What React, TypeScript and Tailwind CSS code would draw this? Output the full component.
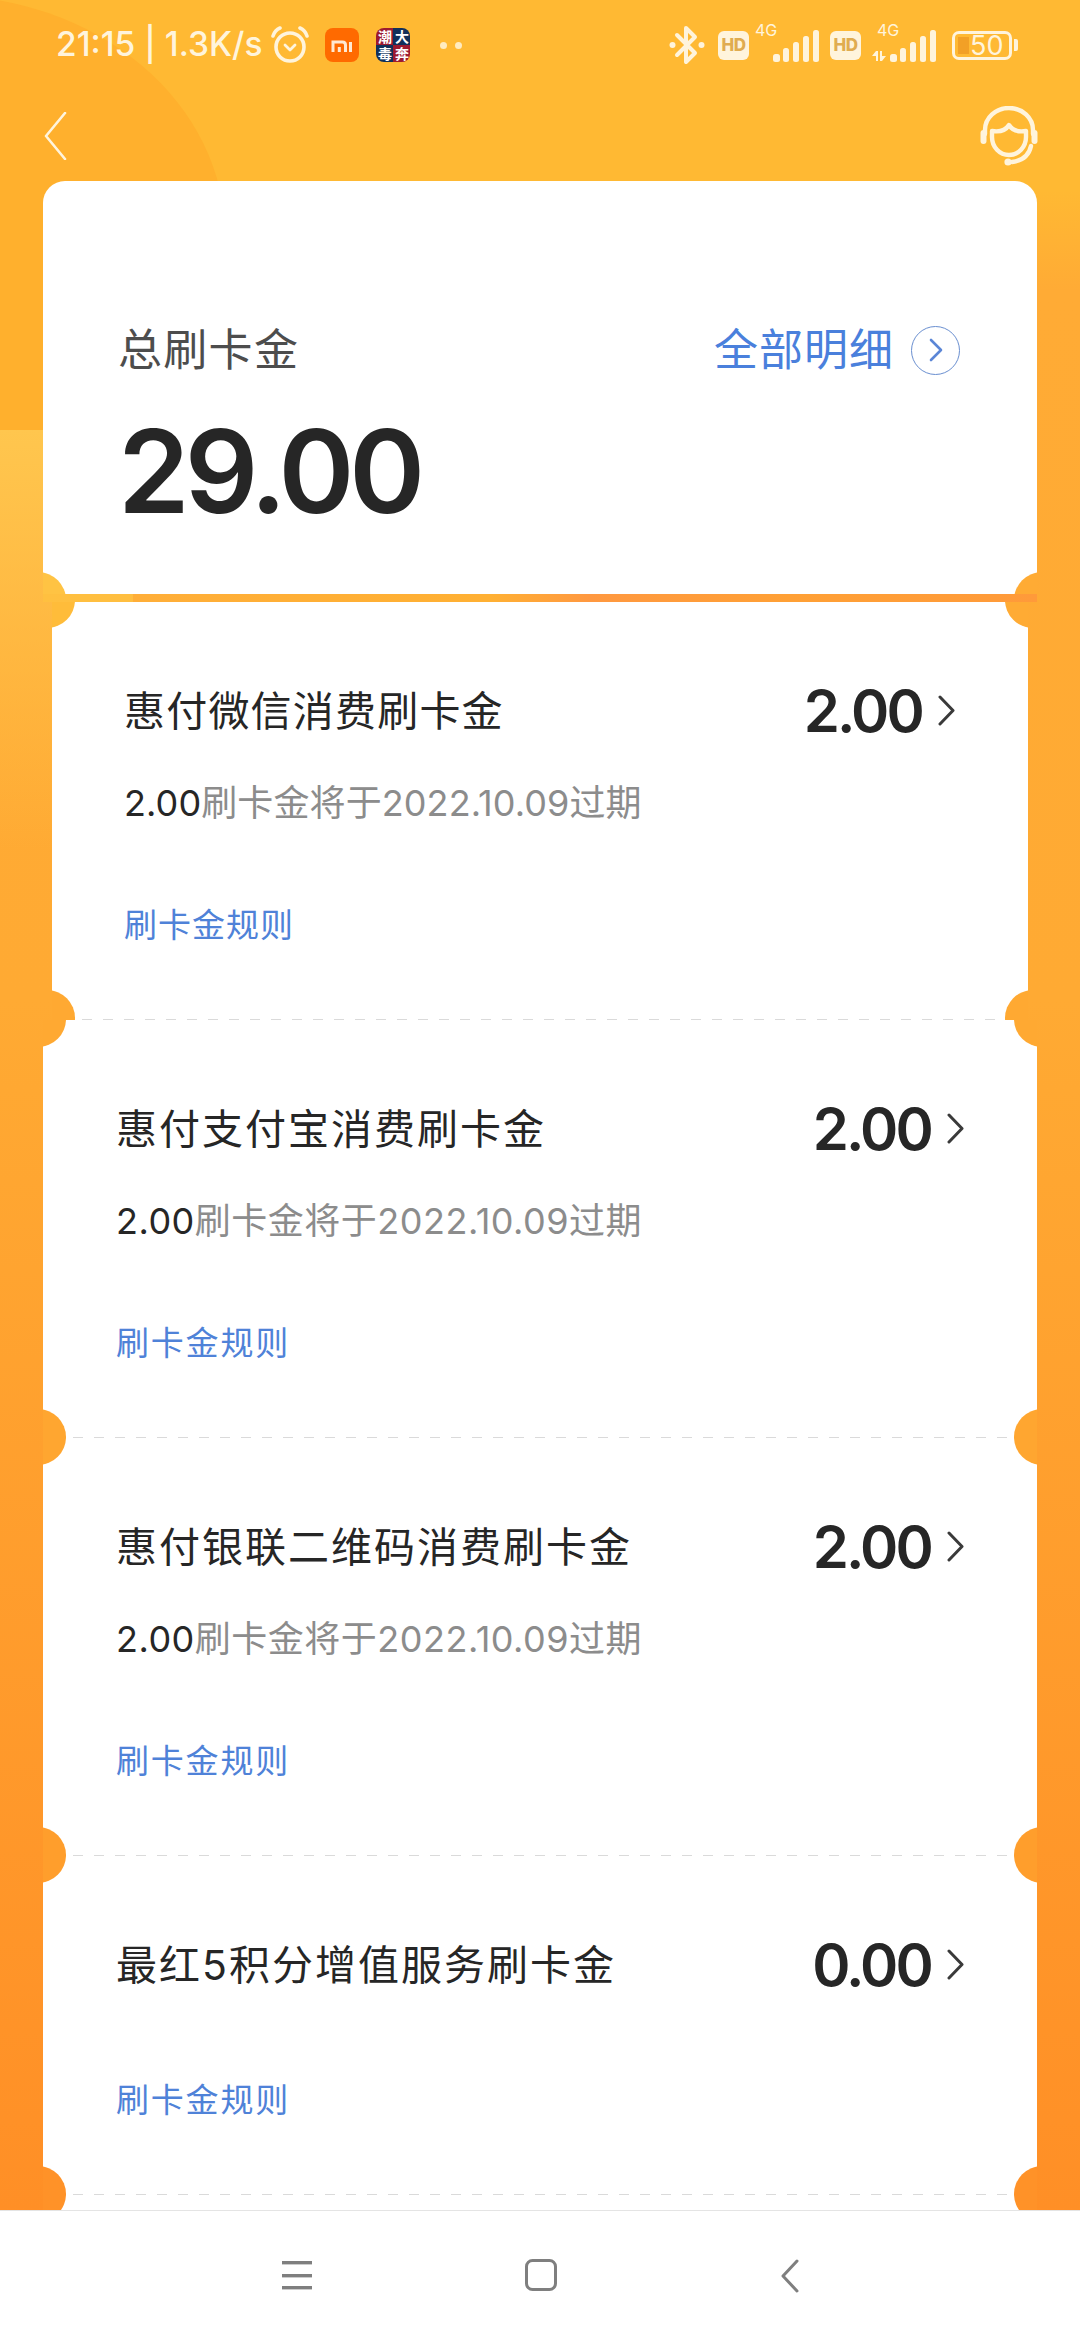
const FONT = "font-['Inter','Noto_Sans_CJK_SC',sans-serif]";

function Alarm() {
  return (
    <svg width="40" height="38" viewBox="0 0 40 38" fill="none" stroke="#FFF4DC" strokeWidth="3.6" strokeLinecap="round" strokeLinejoin="round">
      <circle cx="20" cy="21" r="14" />
      <path d="M3 10 Q5 4 10 2" />
      <path d="M37 10 Q35 4 30 2" />
      <path d="M15 19 L20 24 L25 19" strokeWidth="2.8" />
    </svg>
  );
}

function MiIcon() {
  return (
    <svg width="34" height="34" viewBox="0 0 34 34">
      <rect width="34" height="34" rx="8" fill="#FF6A00" />
      <path d="M8 24 V14 H17.5 Q20.5 14 20.5 17 V24 M14.3 19 V24 M25.5 14 V24" fill="none" stroke="#FFE9D2" strokeWidth="3" />
    </svg>
  );
}

function AppIcon() {
  return (
    <div className="grid h-[34px] w-[34px] grid-cols-2 grid-rows-2 font-['Noto_Sans_CJK_SC',sans-serif] text-[14px] leading-[17px] font-bold text-white">
      <span className="flex items-center justify-center rounded-tl-[8px] bg-[#9C1A30]">潮</span>
      <span className="flex items-center justify-center rounded-tr-[8px] bg-[#12305A]">大</span>
      <span className="flex items-center justify-center rounded-bl-[8px] bg-[#12305A]">毒</span>
      <span className="flex items-center justify-center rounded-br-[8px] bg-[#9C1A30]">奔</span>
    </div>
  );
}

function Bluetooth() {
  return (
    <svg width="36" height="40" viewBox="0 0 36 40" fill="none" stroke="#FFF4DC" strokeWidth="4" strokeLinejoin="round" strokeLinecap="round">
      <path d="M8 10 L26 28 L17 37 V3 L26 12 L8 30" />
      <circle cx="3.5" cy="20" r="3" fill="#FFF4DC" stroke="none" />
      <circle cx="32.5" cy="20" r="3" fill="#FFF4DC" stroke="none" />
    </svg>
  );
}

function HD() {
  return (
    <div className={`flex h-[29px] w-[31px] items-center justify-center rounded-[6px] bg-[#FFF4DC] ${FONT} text-[17px] leading-none font-extrabold tracking-[-0.5px] text-[#E0AC50]`}>
      HD
    </div>
  );
}

function Signal({ arrows }: { arrows?: boolean }) {
  return (
    <svg width="66" height="34" viewBox="0 0 66 34" fill="#FFF4DC">
      {arrows && <path d="M2 28 L6 23 H8 V33 H6 V28 Z M10 33 V23 H12 V28 L16 28 L12 33 Z" />}
      <rect x="20" y="26" width="7" height="8" rx="2.5" />
      <rect x="30" y="20" width="6" height="14" rx="2.5" />
      <rect x="40" y="14" width="6" height="20" rx="2.5" />
      <rect x="50" y="8" width="6" height="26" rx="2.5" />
      <rect x="60" y="2" width="6" height="32" rx="2.5" />
    </svg>
  );
}

function Battery() {
  return (
    <div className="flex items-center">
      <div className="flex h-[29px] w-[60px] items-center rounded-[7px] border-[3px] border-[#FFF4DC] pl-[3px]">
        <div className="h-[17px] w-[11px] bg-[#F2A026]" />
        <span className={`ml-[1px] ${FONT} text-[27px] leading-none font-normal text-[#FFF4DC]`}>50</span>
      </div>
      <div className="ml-[2px] h-[12px] w-[4px] rounded-r-[2px] bg-[#FFF4DC]" />
    </div>
  );
}

function StatusBar() {
  return (
    <div className="flex h-[90px] shrink-0 items-center pr-[62px] pl-[56px]">
      <span className={`${FONT} text-[33.5px] leading-none font-medium whitespace-nowrap text-[#FFF4DC]`}>21:15 | 1.3K/s</span>
      <span className="ml-[8px] flex"><Alarm /></span>
      <span className="ml-[15px] flex"><MiIcon /></span>
      <span className="ml-[17px] flex"><AppIcon /></span>
      <span className="ml-[30px] h-[7px] w-[7px] rounded-full bg-[#FFEBC0]" />
      <span className="ml-[8px] h-[7px] w-[7px] rounded-full bg-[#FFEBC0]" />
      <div className="ml-auto flex items-center">
        <Bluetooth />
        <span className="ml-[13px] flex"><HD /></span>
        <span className="relative ml-[4px] flex">
          <Signal />
          <span className={`absolute top-[-6px] left-[2px] ${FONT} text-[16px] leading-none text-[#FFF4DC]`}>4G</span>
        </span>
        <span className="ml-[11px] flex"><HD /></span>
        <span className="relative ml-[9px] flex">
          <Signal arrows />
          <span className={`absolute top-[-6px] left-[7px] ${FONT} text-[16px] leading-none text-[#FFF4DC]`}>4G</span>
        </span>
        <span className="ml-[16px] flex"><Battery /></span>
      </div>
    </div>
  );
}

function Header() {
  return (
    <div className="flex h-[91px] shrink-0 items-center justify-between pr-[42px] pl-[44px]">
      <svg width="23" height="48" viewBox="0 0 23 48" fill="none" stroke="#FFF4DC" strokeWidth="2.6" strokeLinecap="round" strokeLinejoin="round">
        <path d="M21 1 L2 24 L21 47" />
      </svg>
      <svg width="58" height="60" viewBox="0 0 58 60" fill="none" stroke="#FFF4DC" strokeWidth="4.4" strokeLinecap="round" strokeLinejoin="round">
        <path d="M5 28 V24 A24 22 0 0 1 53 24 V28" />
        <rect x="0.5" y="24" width="6" height="14" rx="3" fill="#FFF4DC" stroke="none" />
        <rect x="51.5" y="24" width="6" height="14" rx="3" fill="#FFF4DC" stroke="none" />
        <path d="M12 25 Q24 27 29 19 Q34 27 46 25 V31 A17 18 0 0 1 12 31 Z" />
        <path d="M51 40 Q48 54 32 56" />
        <circle cx="28" cy="56" r="3.6" fill="#FFF4DC" stroke="none" />
      </svg>
    </div>
  );
}

function Notch({ className }: { className: string }) {
  return <div className={`absolute h-[56px] w-[56px] rounded-full ${className}`} />;
}

function Amount({ value }: { value: string }) {
  return (
    <div className="flex items-center">
      <span className={`${FONT} text-[58px] leading-[60px] font-semibold tracking-[-2.8px] text-[#262626]`}>{value}</span>
      <svg className="mt-[-2px] ml-[16px]" width="17" height="31" viewBox="0 0 17 31" fill="none" stroke="#3A3A3A" strokeWidth="3" strokeLinecap="round" strokeLinejoin="round">
        <path d="M2 2 L15 15.5 L2 29" />
      </svg>
    </div>
  );
}

function Expiry({ track }: { track: string }) {
  return (
    <div className={`mt-[40px] ${FONT} text-[36px] leading-[44px] ${track} text-[#8C8C8C]`}>
      <span className="text-[#262626]">2.00</span>刷卡金将于2022.10.09过期
    </div>
  );
}

function Rule({ gap, track }: { gap: string; track: string }) {
  return <div className={`${gap} ${FONT} text-[33px] leading-[44px] ${track} text-[#4F82D8]`}>刷卡金规则</div>;
}

function Dashed() {
  return <div className="mx-[30px] h-[1.5px] shrink-0 bg-[repeating-linear-gradient(90deg,#DADADA_0_10px,transparent_10px_21px)]" />;
}

function Title({ text, amount, track }: { text: string; amount: string; track: string }) {
  return (
    <div className="flex items-center justify-between pt-[79px]">
      <span className={`${FONT} text-[41px] leading-[60px] ${track} text-[#262626]`}>{text}</span>
      <Amount value={amount} />
    </div>
  );
}

export default function App() {
  return (
    <div className={`relative flex h-[2340px] w-[1080px] flex-col overflow-hidden bg-[linear-gradient(180deg,#FFB933_0,#FFB933_190px,#FFAB35_290px,#FFAA33_1000px,#FF8F26_2210px)] ${FONT}`}>
      <div className="absolute top-0 left-0 h-[430px] w-[300px] overflow-hidden">
        <div className="absolute top-[-5px] left-[-345px] h-[480px] w-[570px] rounded-[50%] bg-[#FFB02D]" />
      </div>
      <div className="absolute top-[430px] left-0 h-[420px] w-[52px] bg-[linear-gradient(180deg,#FFC64E,#FFAB3300)]" />

      <div className="relative flex min-h-0 flex-1 flex-col">
        <StatusBar />
        <Header />
        <div className="flex min-h-0 flex-1 flex-col overflow-hidden">
          <div className="relative mx-[43px] h-[413px] shrink-0 overflow-hidden rounded-t-[22px] bg-white pt-[139px] pr-[77px] pl-[75px]">
            <Notch className="bottom-[-34px] left-[-33px] bg-[#FFC343]" />
            <Notch className="right-[-33px] bottom-[-34px] bg-[#FFAB34]" />
            <div className="flex items-center justify-between">
              <span className={`${FONT} text-[44px] leading-[60px] tracking-[1.3px] text-[#4D4D4D]`}>总刷卡金</span>
              <div className="flex items-center">
                <span className={`${FONT} text-[44px] leading-[60px] tracking-[1px] text-[#4A80DC]`}>全部明细</span>
                <span className="ml-[17px] flex h-[49px] w-[49px] items-center justify-center rounded-full border-[1.5px] border-[#6A8FD0]">
                  <svg width="14" height="24" viewBox="0 0 14 24" fill="none" stroke="#5B86D6" strokeWidth="2.6" strokeLinecap="round" strokeLinejoin="round">
                    <path d="M2 2 L12 12 L2 22" />
                  </svg>
                </span>
              </div>
            </div>
            <div className={`mt-[32px] ${FONT} text-[115px] leading-[120px] font-semibold tracking-[-5px] text-[#262626]`}>29.00</div>
          </div>

          <div className="mx-[43px] h-[8px] shrink-0 bg-[linear-gradient(90deg,#FFC040,#FFBE40_9%,#FFAE38_9.1%,#FFB033_45%,#FF9840_55%,#FFA035_75%,#FF9A3A)]" />

          <div className="relative mx-[52px] flex h-[418px] shrink-0 flex-col overflow-hidden bg-white">
            <Notch className="top-[-30px] left-[-33px] bg-[#FFBC3A]" />
            <Notch className="top-[-30px] right-[-33px] bg-[#FFAB34]" />
            <Notch className="bottom-[-26px] left-[-33px] bg-[#FFA932]" />
            <Notch className="right-[-33px] bottom-[-26px] bg-[#FFA932]" />
            <div className="flex-1 pr-[73px] pl-[72px]">
              <Title text="惠付微信消费刷卡金" amount="2.00" track="tracking-[1.2px]" />
              <Expiry track="tracking-[0.1px]" />
              <Rule gap="mt-[78px]" track="tracking-[1px]" />
            </div>
            <Dashed />
          </div>

          <div className="relative mx-[43px] flex h-[418px] shrink-0 flex-col overflow-hidden bg-white">
            <Notch className="top-[-29px] left-[-33px] bg-[#FFA932]" />
            <Notch className="top-[-29px] right-[-33px] bg-[#FFA932]" />
            <Notch className="bottom-[-27px] left-[-33px] bg-[#FFA630]" />
            <Notch className="right-[-33px] bottom-[-27px] bg-[#FFA630]" />
            <div className="flex-1 pr-[73px] pl-[73px]">
              <Title text="惠付支付宝消费刷卡金" amount="2.00" track="tracking-[2px]" />
              <Expiry track="tracking-[0.5px]" />
              <Rule gap="mt-[78px]" track="tracking-[1.8px]" />
            </div>
            <Dashed />
          </div>

          <div className="relative mx-[43px] flex h-[418px] shrink-0 flex-col overflow-hidden bg-white">
            <Notch className="top-[-29px] left-[-33px] bg-[#FFA630]" />
            <Notch className="top-[-29px] right-[-33px] bg-[#FFA630]" />
            <Notch className="bottom-[-27px] left-[-33px] bg-[#FF9E2C]" />
            <Notch className="right-[-33px] bottom-[-27px] bg-[#FF9E2C]" />
            <div className="flex-1 pr-[73px] pl-[73px]">
              <Title text="惠付银联二维码消费刷卡金" amount="2.00" track="tracking-[2px]" />
              <Expiry track="tracking-[0.5px]" />
              <Rule gap="mt-[78px]" track="tracking-[1.8px]" />
            </div>
            <Dashed />
          </div>

          <div className="relative mx-[43px] flex h-[339px] shrink-0 flex-col overflow-hidden bg-white">
            <Notch className="top-[-29px] left-[-33px] bg-[#FF9E2C]" />
            <Notch className="top-[-29px] right-[-33px] bg-[#FF9E2C]" />
            <Notch className="bottom-[-27px] left-[-33px] bg-[#FF9228]" />
            <Notch className="right-[-33px] bottom-[-27px] bg-[#FF9228]" />
            <div className="flex-1 pr-[73px] pl-[73px]">
              <Title text="最红5积分增值服务刷卡金" amount="0.00" track="tracking-[2px]" />
              <Rule gap="mt-[83px]" track="tracking-[1.8px]" />
            </div>
            <Dashed />
          </div>

          <div className="relative mx-[43px] h-[60px] shrink-0 overflow-hidden bg-white">
            <Notch className="top-[-29px] left-[-33px] bg-[#FF9228]" />
            <Notch className="top-[-29px] right-[-33px] bg-[#FF9228]" />
          </div>
        </div>
      </div>

      <div className="relative flex h-[130px] shrink-0 items-start justify-center border-t-[1.5px] border-[#E4E4E4] bg-white pt-[48px]">
        <svg width="30" height="32" viewBox="0 0 30 32" fill="#7F7F7F">
          <rect y="2" width="30" height="3.4" />
          <rect y="15" width="30" height="3.4" />
          <rect y="27" width="30" height="3.4" />
        </svg>
        <svg className="ml-[213px]" width="32" height="32" viewBox="0 0 32 32" fill="none" stroke="#7F7F7F" strokeWidth="3">
          <rect x="1.5" y="1.5" width="29" height="29" rx="6" />
        </svg>
        <svg className="ml-[224px]" width="18" height="34" viewBox="0 0 18 34" fill="none" stroke="#7F7F7F" strokeWidth="3" strokeLinecap="round" strokeLinejoin="round">
          <path d="M16 2 L2 17 L16 32" />
        </svg>
      </div>
    </div>
  );
}
